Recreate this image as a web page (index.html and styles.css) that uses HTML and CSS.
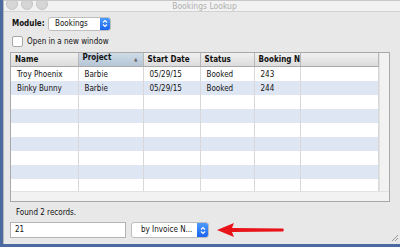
FILE: index.html
```html
<!DOCTYPE html>
<html lang="en">
<head>
  <meta charset="UTF-8">
  <title>Bookings Lookup</title>
  <link rel="stylesheet" href="styles.css">
</head>
<body>
  <div class="window">
    <div class="titlebar">
      <div class="lights">
        <span></span><span></span><span></span>
      </div>
      <div class="title">Bookings Lookup</div>
    </div>

    <div class="content">
      <div class="row module-row">
        <label class="bold">Module:</label>
        <div class="popup popup-module">
          <span class="popup-text">Bookings</span>
          <span class="stepper"><svg width="6" height="9" viewBox="0 0 6 9"><path d="M1 3.5 L3 1.5 L5 3.5 M1 5.5 L3 7.5 L5 5.5" fill="none" stroke="#fff" stroke-width="1.1"/></svg></span>
        </div>
      </div>

      <div class="row check-row">
        <span class="checkbox"></span>
        <span>Open in a new window</span>
      </div>

      <div class="grid">
        <div class="grid-main">
          <table>
            <colgroup>
              <col class="c-name">
              <col class="c-project">
              <col class="c-date">
              <col class="c-status">
              <col class="c-booking">
              <col>
            </colgroup>
            <thead>
              <tr>
                <th>Name</th>
                <th class="sorted">Project <span class="arrow">&#9650;</span></th>
                <th>Start Date</th>
                <th>Status</th>
                <th>Booking N</th>
                <th></th>
              </tr>
            </thead>
            <tbody>
              <tr><td>Troy Phoenix</td><td>Barbie</td><td>05/29/15</td><td>Booked</td><td>243</td><td></td></tr>
              <tr class="alt"><td>Binky Bunny</td><td>Barbie</td><td>05/29/15</td><td>Booked</td><td>244</td><td></td></tr>
              <tr><td></td><td></td><td></td><td></td><td></td><td></td></tr>
              <tr class="alt"><td></td><td></td><td></td><td></td><td></td><td></td></tr>
              <tr><td></td><td></td><td></td><td></td><td></td><td></td></tr>
              <tr class="alt"><td></td><td></td><td></td><td></td><td></td><td></td></tr>
              <tr><td></td><td></td><td></td><td></td><td></td><td></td></tr>
              <tr class="alt"><td></td><td></td><td></td><td></td><td></td><td></td></tr>
              <tr><td></td><td></td><td></td><td></td><td></td><td></td></tr>
            </tbody>
          </table>
          <div class="vscroll"></div>
        </div>
        <div class="hscroll"></div>
      </div>

      <div class="status">Found 2 records.</div>

      <div class="row search-row">
        <div class="field">21</div>
        <div class="popup popup-search">
          <span class="popup-text">by Invoice N...</span>
          <span class="stepper"><svg width="6" height="9" viewBox="0 0 6 9"><path d="M1 3.5 L3 1.5 L5 3.5 M1 5.5 L3 7.5 L5 5.5" fill="none" stroke="#fff" stroke-width="1.1"/></svg></span>
        </div>
      </div>
    </div>

    <svg class="red-arrow" width="72" height="18" viewBox="0 0 72 18">
      <path d="M2 9 L19 2 L17 7 L68 7.5 L69 9 L68 10.5 L17 11 L19 16 Z" fill="#e8141a"/>
    </svg>
    <div class="grip"></div>
  </div>
</body>
</html>
```

FILE: styles.css
```css
body {
  margin: 0;
  background: #4a6aa0;
  font-family: "DejaVu Sans Condensed", "DejaVu Sans", sans-serif;
  font-size: 8px;
  color: #111;
}
.window {
  position: relative;
  width: 397px;
  height: 244px;
  margin-left: 3px;
  background: #e8e8e8;
  border-left: 1px solid #b8b8b8;
  overflow: hidden;
}
.titlebar {
  height: 10px;
  background: #f2f2f2;
  border-top: 1px solid #c8c8c8;
  border-bottom: 1px solid #d2d2d2;
  display: flex;
  align-items: center;
  overflow: hidden;
}
.lights {
  display: flex;
  gap: 3px;
  padding-left: 2px;
  margin-top: -4px;
}
.lights span {
  width: 10px;
  height: 10px;
  border-radius: 50%;
  background: #d6d6d6;
  border: 1px solid #c4c4c4;
}
.title {
  flex: 1;
  text-align: center;
  color: #b0b0b0;
  font-size: 8.5px;
  margin-left: -40px;
}
.content {
  padding: 4px 7px 0 6px;
}
.row {
  display: flex;
  align-items: center;
}
.bold {
  font-weight: bold;
}
.module-row {
  height: 15px;
  margin-left: 2px;
}
.module-row label {
  width: 36px;
}
.popup {
  display: flex;
  height: 14px;
  background: #fff;
  border: 1px solid #bdbdbd;
  border-radius: 3px;
  box-sizing: border-box;
  overflow: hidden;
}
.popup-text {
  flex: 1;
  padding-left: 6px;
  line-height: 12px;
  white-space: nowrap;
}
.stepper {
  width: 10px;
  background: linear-gradient(#4c9bff, #1a64f0);
  display: flex;
  align-items: center;
  justify-content: center;
}
.popup-module {
  width: 63px;
}
.check-row {
  margin-top: 4px;
  height: 12px;
  gap: 4px;
  margin-left: 2px;
}
.checkbox {
  width: 9px;
  height: 9px;
  background: #fff;
  border: 1px solid #a8a8a8;
  border-radius: 2px;
}
.grid {
  margin-top: 5px;
  width: 380px;
  height: 150px;
  border: 1px solid #a9a9a9;
  box-sizing: border-box;
  background: #fff;
  display: flex;
  flex-direction: column;
}
.grid-main {
  flex: 1;
  display: flex;
  overflow: hidden;
}
table {
  flex: 1;
  border-collapse: collapse;
  table-layout: fixed;
}
.c-name { width: 67px; }
.c-project { width: 65px; }
.c-date { width: 57px; }
.c-status { width: 54px; }
.c-booking { width: 41px; }
th {
  height: 13px;
  padding: 0 0 0 4px;
  text-align: left;
  font-weight: bold;
  background: linear-gradient(#f0f0f0, #dcdcdc);
  border-right: 1px solid #b8b8b8;
  border-bottom: 1px solid #aaa;
  white-space: nowrap;
  overflow: hidden;
}
th.sorted {
  background: linear-gradient(#cfdbe6, #b6c6d6);
}
.arrow {
  float: right;
  font-size: 5px;
  color: #666;
  padding-right: 5px;
  line-height: 13px;
}
td {
  height: 14px;
  padding: 0 0 0 6px;
  border-right: 1px solid #d8d8d8;
  white-space: nowrap;
  overflow: hidden;
}
tr.alt td {
  background: #dfe6f3;
}
.vscroll {
  width: 9px;
  background: #f2f2f2;
  border-left: 1px solid #e2e2e2;
}
.hscroll {
  height: 9px;
  background: #f2f2f2;
  border-top: 1px solid #e2e2e2;
}
.status {
  margin: 5px 0 0 6px;
  height: 12px;
  line-height: 12px;
}
.search-row {
  margin-top: 3px;
  gap: 5px;
}
.field {
  width: 116px;
  height: 16px;
  box-sizing: border-box;
  background: #fff;
  border: 1px solid #b4b4b4;
  padding-left: 4px;
  line-height: 14px;
}
.popup-search {
  width: 78px;
  height: 16px;
}
.popup-search .popup-text {
  line-height: 14px;
  padding-left: 9px;
}
.popup-search .stepper {
  width: 11px;
}
.red-arrow {
  position: absolute;
  left: 211px;
  top: 221px;
}
.grip {
  position: absolute;
  right: 3px;
  bottom: 3px;
  width: 6px;
  height: 6px;
  background: linear-gradient(135deg, transparent 45%, #999 45%, #999 55%, transparent 55%, transparent 70%, #999 70%, #999 80%, transparent 80%);
}
```
